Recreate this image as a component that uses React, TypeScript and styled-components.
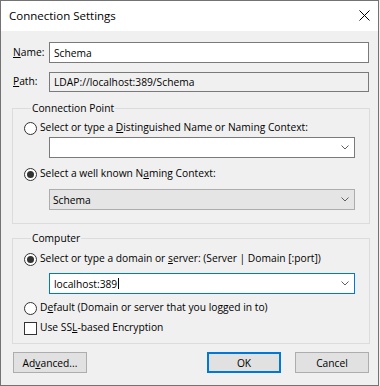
import React from "react";
import styled, { createGlobalStyle } from "styled-components";

const GlobalStyle = createGlobalStyle`
  html, body {
    margin: 0;
    padding: 0;
    background: #f0f0f0;
  }
  body {
    font-family: "Open Sans", "Noto Sans", sans-serif;
    font-size: 10.25px;
    color: #000;
  }
`;

export default function App() {
  return (
    <>
      <GlobalStyle />
      <Window>
        <TitleBar>
          <Title>Connection Settings</Title>
          <CloseIcon width="11" height="11" viewBox="0 0 11 11">
            <path d="M0.5 0.5 L10.5 10.5 M10.5 0.5 L0.5 10.5" stroke="#000" strokeWidth="1" />
          </CloseIcon>
        </TitleBar>

        <Content>
          <FieldRow h={21} top={0}>
            <FieldLabel>
              <Key>N</Key>ame:
            </FieldLabel>
            <TextBox>Schema</TextBox>
          </FieldRow>
          <FieldRow h={20} top={9}>
            <FieldLabel>
              <Key>P</Key>ath:
            </FieldLabel>
            <TextBox readOnlyBox>LDAP://localhost:389/Schema</TextBox>
          </FieldRow>

          <Group top={8} bottom={13}>
            <Legend>Connection Point</Legend>
            <OptionRow top={4}>
              <Radio />
              <OptionText>
                Select or type a <Key>D</Key>istinguished Name or Naming Context:
              </OptionText>
            </OptionRow>
            <Combo top={1}>
              <ComboText />
              <Chevron />
            </Combo>
            <OptionRow top={8}>
              <Radio checked />
              <OptionText>
                Select a well known N<Key>a</Key>ming Context:
              </OptionText>
            </OptionRow>
            <Combo top={7} variant="list">
              <ComboText>Schema</ComboText>
              <Chevron />
            </Combo>
          </Group>

          <Group top={6} bottom={7}>
            <Legend>Computer</Legend>
            <OptionRow top={5}>
              <Radio checked />
              <OptionText>
                Select or type a domain or <Key>s</Key>erver: (Server | Domain [:port])
              </OptionText>
            </OptionRow>
            <Combo top={6} variant="focused">
              <ComboText>
                localhost:389
                <Caret />
              </ComboText>
              <Chevron />
            </Combo>
            <OptionRow top={6}>
              <Radio />
              <OptionText>
                D<Key>e</Key>fault (Domain or server that you logged in to)
              </OptionText>
            </OptionRow>
            <OptionRow top={4}>
              <CheckBox />
              <OptionText>
                Use SS<Key>L</Key>-based Encryption
              </OptionText>
            </OptionRow>
          </Group>

          <ButtonBar>
            <Button>
              Ad<Key>v</Key>anced...
            </Button>
            <Spacer />
            <Button primary>OK</Button>
            <Button>Cancel</Button>
          </ButtonBar>
        </Content>
      </Window>
    </>
  );
}

function Chevron() {
  return (
    <ChevronSvg width="8" height="5" viewBox="0 0 8 5">
      <polyline points="0.5,0.5 4,4 7.5,0.5" fill="none" stroke="#5f5f5f" strokeWidth="1" />
    </ChevronSvg>
  );
}

const Window = styled.div`
  width: 379px;
  height: 386px;
  box-sizing: border-box;
  border: 1px solid #737373;
  background: #f0f0f0;
  display: flex;
  flex-direction: column;
`;

const TitleBar = styled.div`
  height: 30px;
  background: #fff;
  display: flex;
  align-items: center;
  padding: 0 8px;
`;

const Title = styled.span`
  flex: 1;
  font-size: 11.5px;
  line-height: 16px;
  margin-top: -1px;
`;

const CloseIcon = styled.svg`
  display: block;
  margin-top: -1px;
`;

const Content = styled.div`
  flex: 1;
  padding: 11px 8px 0 11px;
  display: flex;
  flex-direction: column;
`;

const Key = styled.span`
  text-decoration: underline;
  text-underline-offset: 1px;
`;

const FieldRow = styled.div<{ h: number; top: number }>`
  display: flex;
  align-items: center;
  height: ${(p) => p.h}px;
  margin-top: ${(p) => p.top}px;
`;

const FieldLabel = styled.span`
  width: 37px;
  padding: 0 0 2px 1px;
  box-sizing: border-box;
`;

const TextBox = styled.div<{ readOnlyBox?: boolean }>`
  flex: 1;
  height: 100%;
  margin-right: 1px;
  box-sizing: border-box;
  border: 1px solid #7a7a7a;
  background: ${(p) => (p.readOnlyBox ? "#f0f0f0" : "#fff")};
  padding-left: 4px;
  display: flex;
  align-items: center;
`;

const Group = styled.fieldset<{ top: number; bottom: number }>`
  margin: ${(p) => p.top}px 0 0;
  padding: 0 14px ${(p) => p.bottom}px 11px;
  border: 1px solid #dcdcdc;
  min-width: 0;
  display: flex;
  flex-direction: column;
`;

const Legend = styled.legend`
  margin-left: 7px;
  padding: 0 1px;
  line-height: 16px;
`;

const OptionRow = styled.div<{ top: number }>`
  display: flex;
  align-items: center;
  height: 16px;
  margin-top: ${(p) => p.top}px;
`;

const OptionText = styled.span`
  margin-left: 3px;
  padding-bottom: 2px;
  white-space: nowrap;
`;

const Radio = styled.span<{ checked?: boolean }>`
  width: 13px;
  height: 13px;
  box-sizing: border-box;
  border: 1px solid #333;
  border-radius: 50%;
  background: #fff;
  display: flex;
  align-items: center;
  justify-content: center;

  &::after {
    content: "";
    display: ${(p) => (p.checked ? "block" : "none")};
    width: 7px;
    height: 7px;
    border-radius: 50%;
    background: #333;
  }
`;

const CheckBox = styled.span`
  width: 13px;
  height: 13px;
  box-sizing: border-box;
  border: 1px solid #333;
  background: #fff;
`;

const Combo = styled.div<{ top: number; variant?: "edit" | "list" | "focused" }>`
  height: 21px;
  margin: ${(p) => p.top}px 0 0 25px;
  box-sizing: border-box;
  display: flex;
  align-items: center;
  padding: 0 5px 0 4px;
  border: 1px solid
    ${(p) => (p.variant === "list" ? "#adadad" : p.variant === "focused" ? "#0078d7" : "#7a7a7a")};
  background: ${(p) => (p.variant === "list" ? "#e5e5e5" : "#fff")};
  padding-left: ${(p) => (p.variant === "list" ? "3px" : "4px")};
`;

const ComboText = styled.span`
  flex: 1;
  display: flex;
  align-items: center;
`;

const Caret = styled.span`
  width: 1px;
  height: 11px;
  background: #000;
  margin-left: 1px;
`;

const ChevronSvg = styled.svg`
  display: block;
`;

const ButtonBar = styled.div`
  display: flex;
  gap: 14px;
  margin-top: 8px;
  padding: 0 1px;
`;

const Spacer = styled.div`
  flex: 1;
`;

const Button = styled.div<{ primary?: boolean }>`
  width: 74px;
  height: 21px;
  box-sizing: border-box;
  display: flex;
  align-items: center;
  justify-content: center;
  background: #e1e1e1;
  border: ${(p) => (p.primary ? "2px solid #0078d7" : "1px solid #adadad")};
`;
